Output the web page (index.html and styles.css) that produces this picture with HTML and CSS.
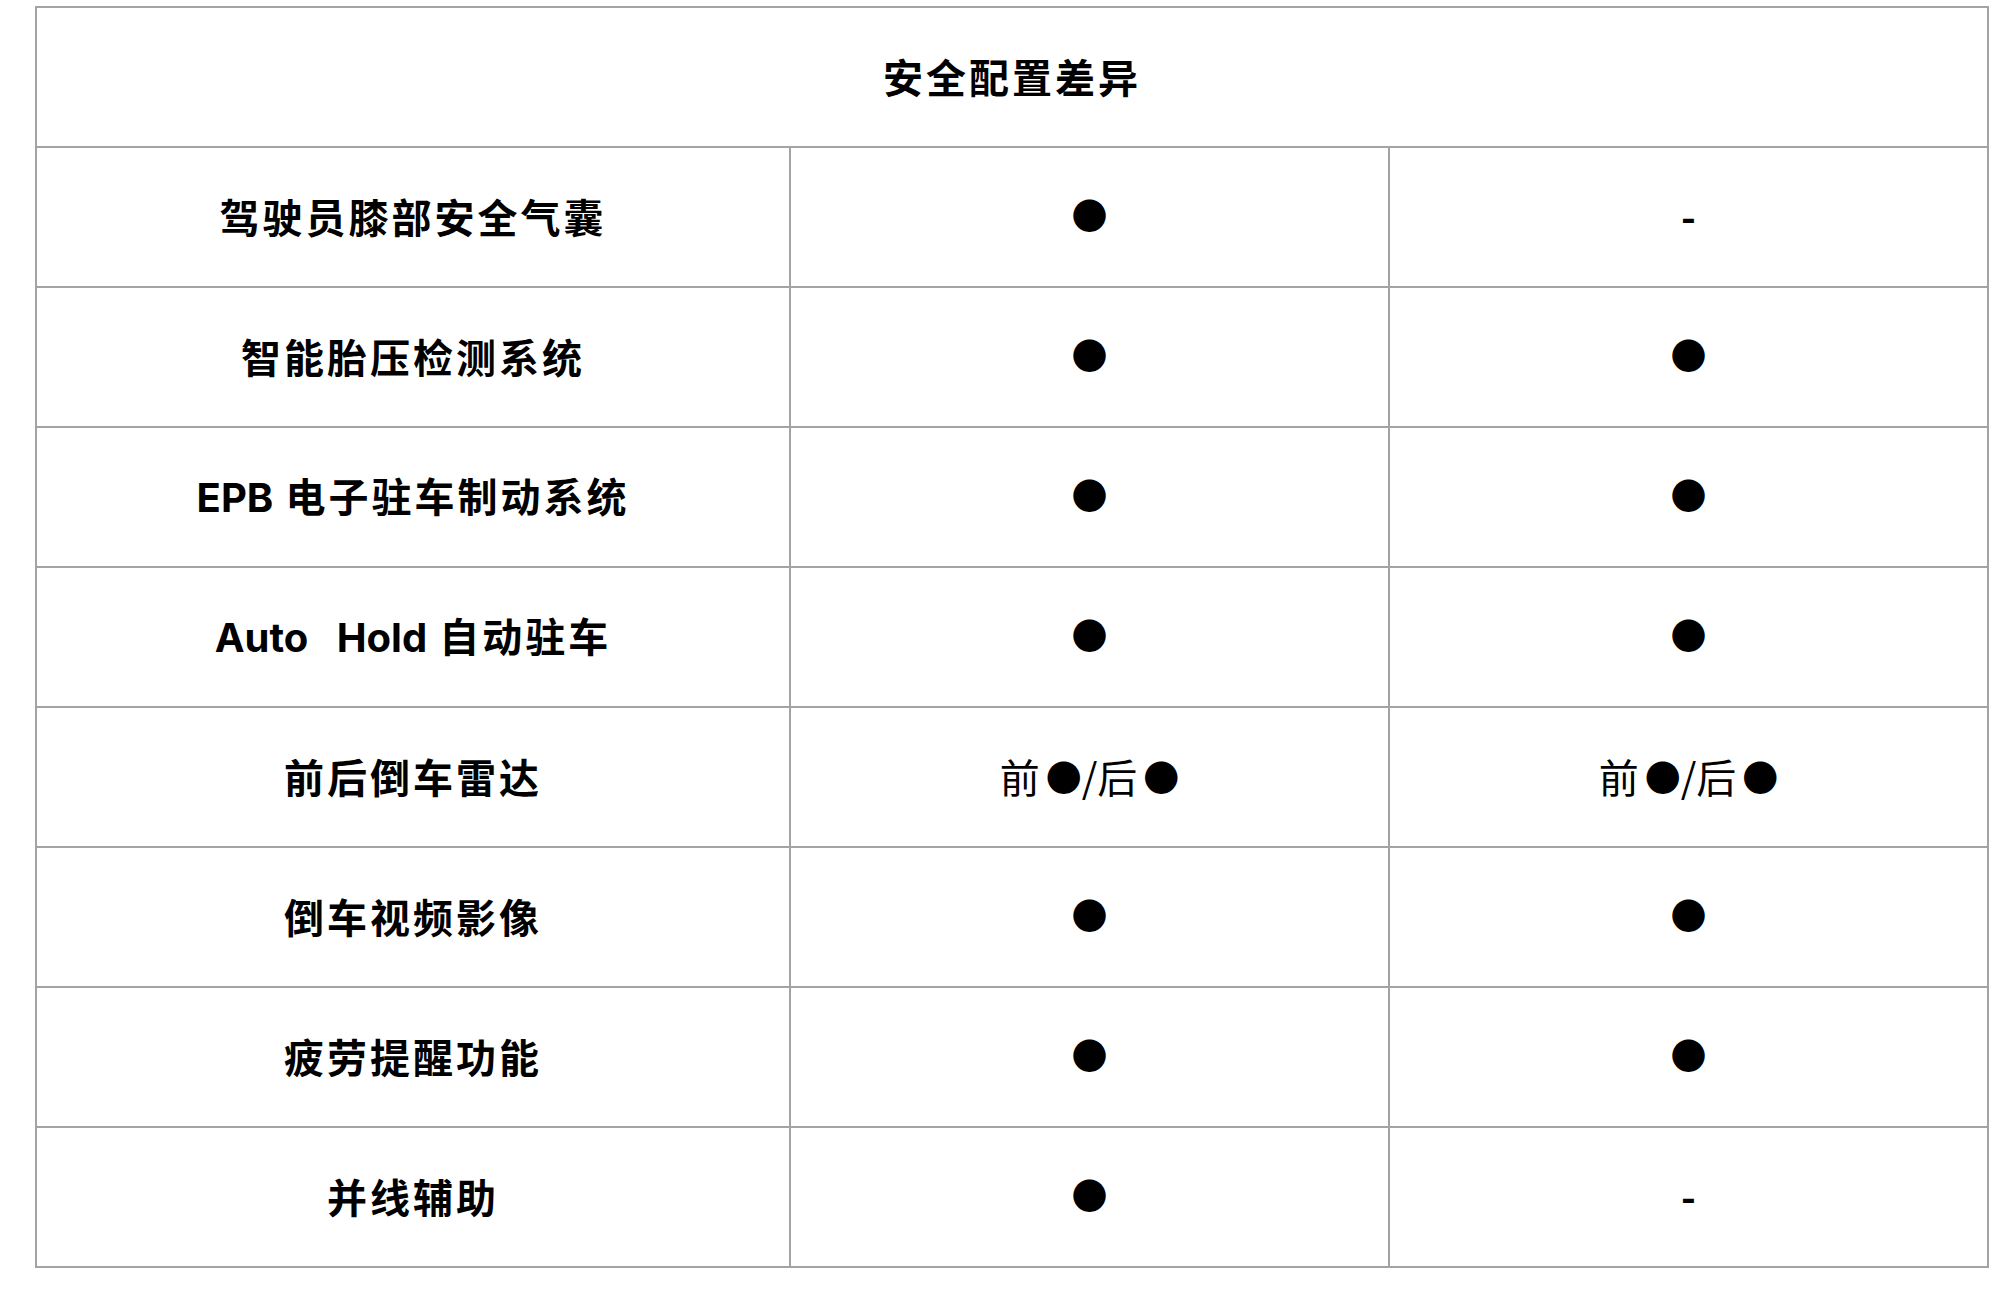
FILE: index.html
```html
<!DOCTYPE html>
<html lang="zh-CN">
<head>
<meta charset="utf-8">
<title>安全配置差异</title>
<link rel="stylesheet" href="styles.css">
</head>
<body>
<table class="spec">
  <colgroup>
    <col class="c-name">
    <col class="c-a">
    <col class="c-b">
  </colgroup>
  <thead>
    <tr><th colspan="3" class="title">安全配置差异</th></tr>
  </thead>
  <tbody>
    <tr><td class="name">驾驶员膝部安全气囊</td><td><span class="dot">●</span></td><td><span class="dash">-</span></td></tr>
    <tr><td class="name">智能胎压检测系统</td><td><span class="dot">●</span></td><td><span class="dot">●</span></td></tr>
    <tr><td class="name"><span class="latin">EPB</span> 电子驻车制动系统</td><td><span class="dot">●</span></td><td><span class="dot">●</span></td></tr>
    <tr><td class="name"><span class="latin">Auto&nbsp;&nbsp; Hold</span> 自动驻车</td><td><span class="dot">●</span></td><td><span class="dot">●</span></td></tr>
    <tr><td class="name">前后倒车雷达</td><td class="mix">前<span class="dot">●</span>/后<span class="dot">●</span></td><td class="mix">前<span class="dot">●</span>/后<span class="dot">●</span></td></tr>
    <tr><td class="name">倒车视频影像</td><td><span class="dot">●</span></td><td><span class="dot">●</span></td></tr>
    <tr><td class="name">疲劳提醒功能</td><td><span class="dot">●</span></td><td><span class="dot">●</span></td></tr>
    <tr><td class="name">并线辅助</td><td><span class="dot">●</span></td><td><span class="dash">-</span></td></tr>
  </tbody>
</table>
</body>
</html>
```

FILE: styles.css
```css
html, body {
  margin: 0;
  background: #ffffff;
}
body {
  padding: 6px 0 0 35px;
  font-family: "Noto Sans CJK SC", "Noto Sans", sans-serif;
  color: #000000;
}
.spec {
  border-collapse: collapse;
  width: 1952px;
  table-layout: fixed;
}
.c-name { width: 754px; }
.c-a { width: 599px; }
.c-b { width: 599px; }
.spec th, .spec td {
  border: 2px solid #a3a3a3;
  height: 136px;
  padding: 0 0 2px 0;
  text-align: center;
  vertical-align: middle;
  font-size: 40px;
  line-height: 1;
}
.title {
  font-weight: 700;
  letter-spacing: 3px;
}
.name {
  font-weight: 700;
  letter-spacing: 3px;
}
.latin {
  font-family: Inter, "Noto Sans", sans-serif;
  font-weight: 700;
  letter-spacing: 0;
}
.dot {
  font-family: "Noto Sans CJK SC", sans-serif;
  font-size: 36px;
  vertical-align: 3px;
}
.mix {
  font-weight: 400;
  letter-spacing: 0;
}
.mix .dot {
  margin-left: 6px;
  vertical-align: 1px;
}
.dash {
  font-family: "Noto Sans CJK SC", sans-serif;
  font-weight: 700;
  font-size: 40px;
  vertical-align: 2px;
}
```
